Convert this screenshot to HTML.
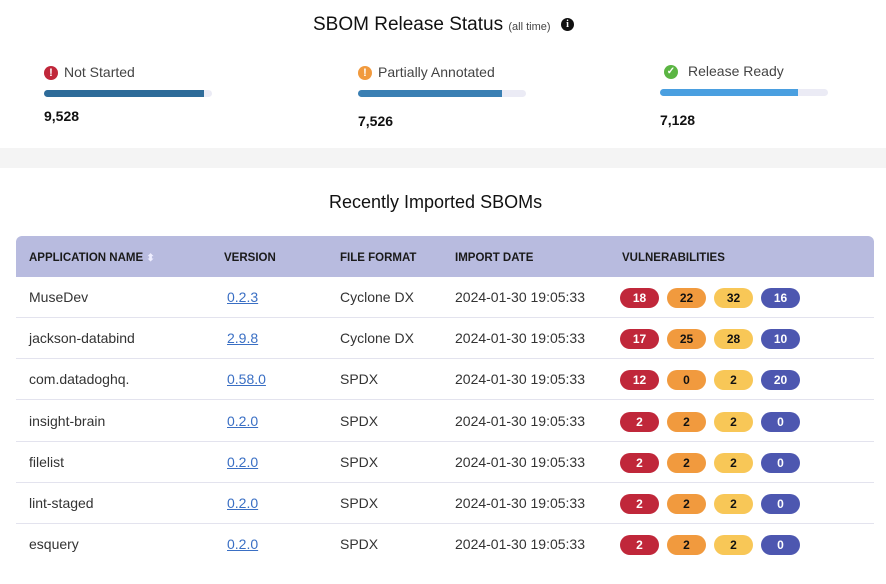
<!DOCTYPE html>
<html><head><style>
*{margin:0;padding:0;box-sizing:border-box}
body{width:886px;height:584px;background:#fff;font-family:"Liberation Sans",sans-serif;color:#222;position:relative;overflow:hidden}
.a{position:absolute;white-space:nowrap}
.band{position:absolute;left:0;top:148px;width:886px;height:20px;background:#f4f4f4}
.lbl{font-size:14px;color:#444}
.num{font-size:14px;font-weight:bold;color:#111}
.bar{position:absolute;height:7px;border-radius:4px;background:#ebebf5;width:168px}
.bar i{display:block;height:7px;border-radius:4px 0 0 4px}
.ic{position:absolute;width:14px;height:14px;border-radius:50%;color:#fff;font-size:11px;font-weight:bold;text-align:center;line-height:14px}
.th{position:absolute;left:16px;top:236px;width:858px;height:41px;background:#b8bbdf;border-radius:6px 6px 0 0}
.hd{font-size:11.5px;font-weight:bold;color:#1a1a1a;top:251px}
.td{font-size:14px;color:#333}
.ln{position:absolute;left:16px;width:858px;height:1px;background:#e3e3ee}
.v{color:#3a6fc4;text-decoration:underline}
.b{position:absolute;width:39px;height:20px;border-radius:10px;font-size:12px;font-weight:bold;text-align:center;line-height:20px}
.r{background:#c0273a;color:#fff}.o{background:#f19a3e;color:#111}.y{background:#f8c757;color:#111}.p{background:#4d57b0;color:#fff}
</style></head><body>
<div class="a" style="left:313px;top:14px;font-size:19px;color:#111">SBOM Release Status <span style="font-size:11px;color:#444">(all time)</span></div>
<div class="ic" style="left:561px;top:18px;background:#111;width:13px;height:13px;line-height:13px;font-size:10px;font-family:'Liberation Serif',serif">i</div>

<div class="ic" style="left:44px;top:66px;background:#c0273a">!</div>
<div class="a lbl" style="left:64px;top:64px">Not Started</div>
<div class="bar" style="left:44px;top:90px"><i style="width:160px;background:#2e6b99"></i></div>
<div class="a num" style="left:44px;top:108px">9,528</div>

<div class="ic" style="left:358px;top:66px;background:#f19a3e">!</div>
<div class="a lbl" style="left:378px;top:64px">Partially Annotated</div>
<div class="bar" style="left:358px;top:90px"><i style="width:144px;background:#3a7fb3"></i></div>
<div class="a num" style="left:358px;top:113px">7,526</div>

<div class="ic" style="left:664px;top:65px;background:#5bb543;font-size:10px">✓</div>
<div class="a lbl" style="left:688px;top:63px">Release Ready</div>
<div class="bar" style="left:660px;top:89px"><i style="width:138px;background:#4a9fe0"></i></div>
<div class="a num" style="left:660px;top:112px">7,128</div>

<div class="band"></div>
<div class="a" style="left:329px;top:192px;font-size:18px;color:#111">Recently Imported SBOMs</div>

<div class="th"></div>
<div class="a hd" style="left:29px;top:252px">APPLICATION NAME <span style="color:#eef;font-size:10px">⬍</span></div>
<div class="a hd" style="left:224px;top:252px">VERSION</div>
<div class="a hd" style="left:340px;top:252px">FILE FORMAT</div>
<div class="a hd" style="left:455px;top:252px">IMPORT DATE</div>
<div class="a hd" style="left:622px;top:252px">VULNERABILITIES</div>

<div id="rows"></div>
<script>
var d=[["MuseDev","0.2.3","Cyclone DX",18,22,32,16],["jackson-databind","2.9.8","Cyclone DX",17,25,28,10],["com.datadoghq.","0.58.0","SPDX",12,0,2,20],["insight-brain","0.2.0","SPDX",2,2,2,0],["filelist","0.2.0","SPDX",2,2,2,0],["lint-staged","0.2.0","SPDX",2,2,2,0],["esquery","0.2.0","SPDX",2,2,2,0]];
var h="";
d.forEach(function(r,i){var c=298+i*41.2,t=c-9;
if(i<6)h+='<div class="ln" style="top:'+(c+19)+'px"></div>';
h+='<div class="a td" style="left:29px;top:'+t+'px">'+r[0]+'</div>';
h+='<div class="a td v" style="left:227px;top:'+t+'px">'+r[1]+'</div>';
h+='<div class="a td" style="left:340px;top:'+t+'px">'+r[2]+'</div>';
h+='<div class="a td" style="left:455px;top:'+t+'px">2024-01-30 19:05:33</div>';
var cl=["r","o","y","p"],xs=[620,667,714,761];
for(var k=0;k<4;k++)h+='<div class="b '+cl[k]+'" style="left:'+xs[k]+'px;top:'+(c-10)+'px">'+r[3+k]+'</div>';
});
document.getElementById("rows").innerHTML=h;
</script>
</body></html>
